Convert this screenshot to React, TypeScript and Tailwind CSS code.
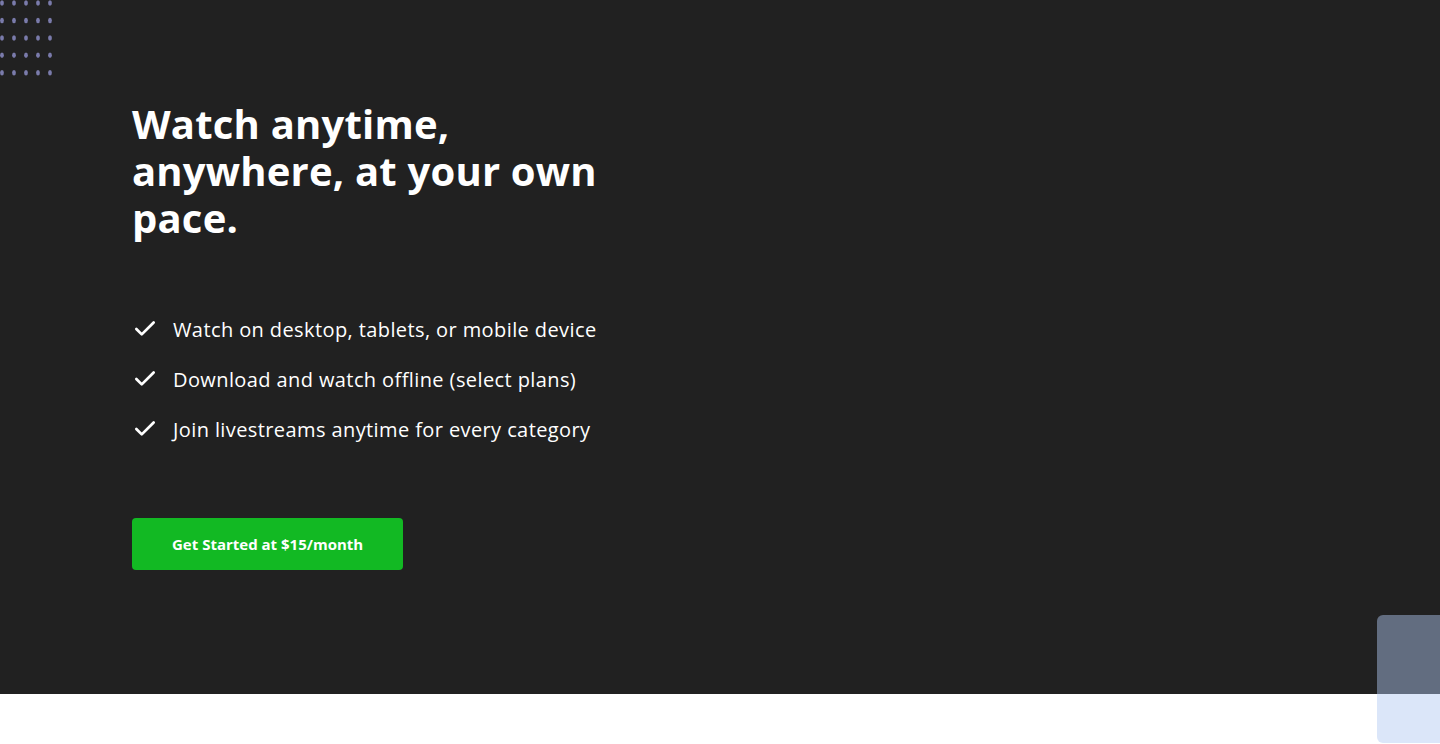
import { Check } from "lucide-react";

const Dots = () => {
  const cols = [2, 14, 26, 38, 50];
  const rows = [3, 20.5, 38, 55.3, 72.7];
  return (
    <svg width="60" height="80" viewBox="0 0 60 80" className="absolute left-0 top-0">
      {rows.map((y) =>
        cols.map((x) => <ellipse key={`${x}-${y}`} cx={x} cy={y} rx="1.9" ry="2.7" fill="#7a7bab" />)
      )}
    </svg>
  );
};

export default function App() {
  const features = [
    "Watch on desktop, tablets, or mobile device",
    "Download and watch offline (select plans)",
    "Join livestreams anytime for every category",
  ];

  return (
    <div className="min-h-screen bg-white" style={{ fontFamily: "'Open Sans', sans-serif" }}>
      <section className="relative h-[694px] bg-[#212121] px-[132px] pt-[100px]">
        <Dots />
        <h1 className="w-[480px] text-[40px] font-bold leading-[47px] tracking-[0.2px] text-white">
          Watch anytime, anywhere, at your own pace.
        </h1>
        <ul className="mt-[76px] flex flex-col gap-[25px]">
          {features.map((f) => (
            <li key={f} className="flex items-center gap-[15px] text-[20px] leading-[25px] text-white">
              <Check size={26} strokeWidth={2.5} className="-mt-[2px] text-white" />
              <span className="tracking-[0.4px]">{f}</span>
            </li>
          ))}
        </ul>
        <button className="mt-[76px] h-[52px] rounded-[4px] bg-[#12b923] px-[40px] text-[15px] font-bold text-white">
          Get Started at $15/month
        </button>
      </section>
      <div className="fixed bottom-[1px] right-[-10px] h-[128px] w-[73px] rounded-[6px] bg-[rgba(176,200,242,0.46)]" />
    </div>
  );
}
